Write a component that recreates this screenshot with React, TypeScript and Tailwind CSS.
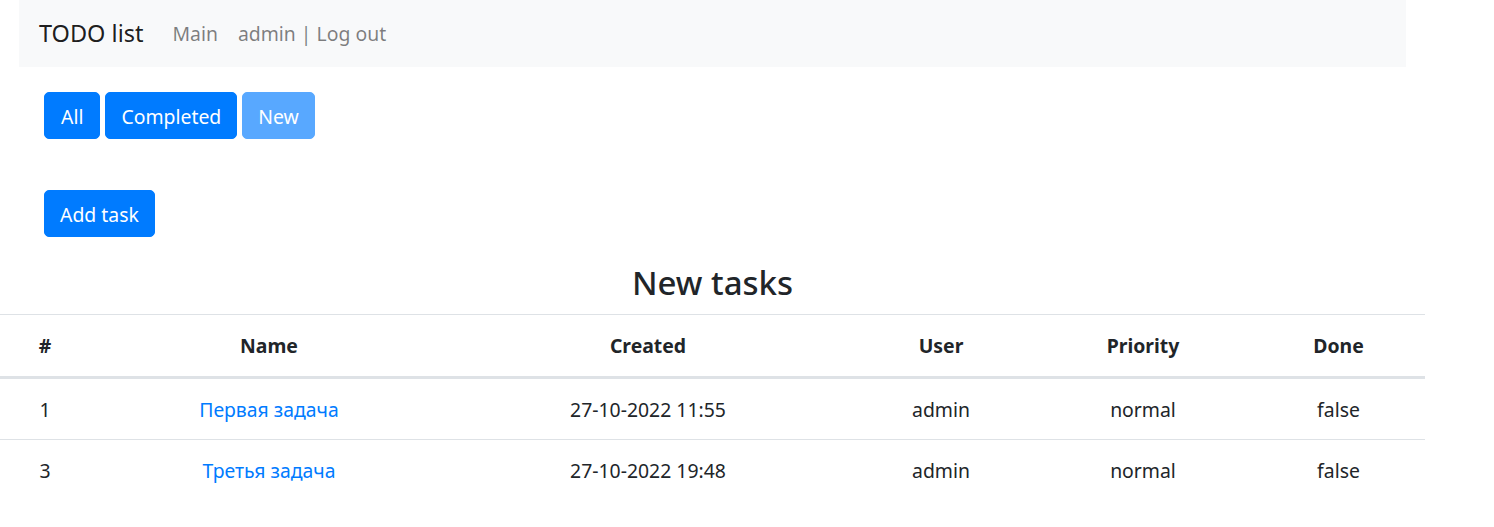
import React from 'react';

type Task = {
    id: number;
    name: string;
    created: string;
    user: string;
    priority: string;
    done: boolean;
};

const tasks: Task[] = [
    { id: 1, name: 'Первая задача', created: '27-10-2022 11:55', user: 'admin', priority: 'normal', done: false },
    { id: 3, name: 'Третья задача', created: '27-10-2022 19:48', user: 'admin', priority: 'normal', done: false },
];

const columns = [
    { label: '#', width: 'w-[90px]' },
    { label: 'Name', width: 'w-[358px]' },
    { label: 'Created', width: 'w-[400px]' },
    { label: 'User', width: 'w-[186px]' },
    { label: 'Priority', width: 'w-[218px]' },
    { label: 'Done', width: 'w-[173px]' },
];

const btn = 'inline-block rounded-[5px] bg-[#007bff] px-[15px] pt-[8.5px] pb-[6.5px] text-[19.4px] leading-[30px] text-white border border-[#007bff]';

const App: React.FC = () => {
    return (
        <div className="min-h-[527px] bg-white text-[#212529] font-['Segoe_UI','Noto_Sans',sans-serif] text-[19.4px] leading-[30px]">
            {/* Navbar */}
            <nav className="ml-[19px] w-[1387px] h-[67px] bg-[#f8f9fa] flex items-center px-[20px]">
                <span className="text-[23.5px] leading-[37px] text-black/90 mr-[19px]">TODO list</span>
                <a className="px-[10px] text-black/50">Main</a>
                <a className="px-[10px] text-black/50">admin | Log out</a>
            </nav>

            {/* Filters */}
            <div className="pl-[44px] pt-[25px] flex gap-[5px]">
                <button className={`${btn} px-[16px]`}>All</button>
                <button className={btn}>Completed</button>
                <button className={`${btn} opacity-65`}>New</button>
            </div>

            <div className="pl-[44px] pt-[51px]">
                <button className={btn}>Add task</button>
            </div>

            {/* Table */}
            <div className="w-[1425px] pt-[25px]">
                <h2 className="text-center text-[33px] leading-[42px] font-medium mb-[10px]">New tasks</h2>
                <table className="w-[1425px] table-fixed border-collapse">
                    <thead>
                        <tr>
                            {columns.map(col => (
                                <th key={col.label} className={`${col.width} text-center font-bold px-[15px] pt-[16px] pb-[15px] border-t border-t-[#dee2e6] border-b-[3px] border-b-[#dee2e6]`}>
                                    {col.label}
                                </th>
                            ))}
                        </tr>
                    </thead>
                    <tbody>
                        {tasks.map(task => (
                            <tr key={task.id} className="border-b border-[#dee2e6] last:border-b-0">
                                <td className="text-center px-[15px] pt-[16px] pb-[14px]">{task.id}</td>
                                <td className="text-center px-[15px] pt-[16px] pb-[14px]"><a className="text-[#007bff]">{task.name}</a></td>
                                <td className="text-center px-[15px] pt-[16px] pb-[14px]">{task.created}</td>
                                <td className="text-center px-[15px] pt-[16px] pb-[14px]">{task.user}</td>
                                <td className="text-center px-[15px] pt-[16px] pb-[14px]">{task.priority}</td>
                                <td className="text-center px-[15px] pt-[16px] pb-[14px]">{String(task.done)}</td>
                            </tr>
                        ))}
                    </tbody>
                </table>
            </div>
        </div>
    );
};

export default App;
